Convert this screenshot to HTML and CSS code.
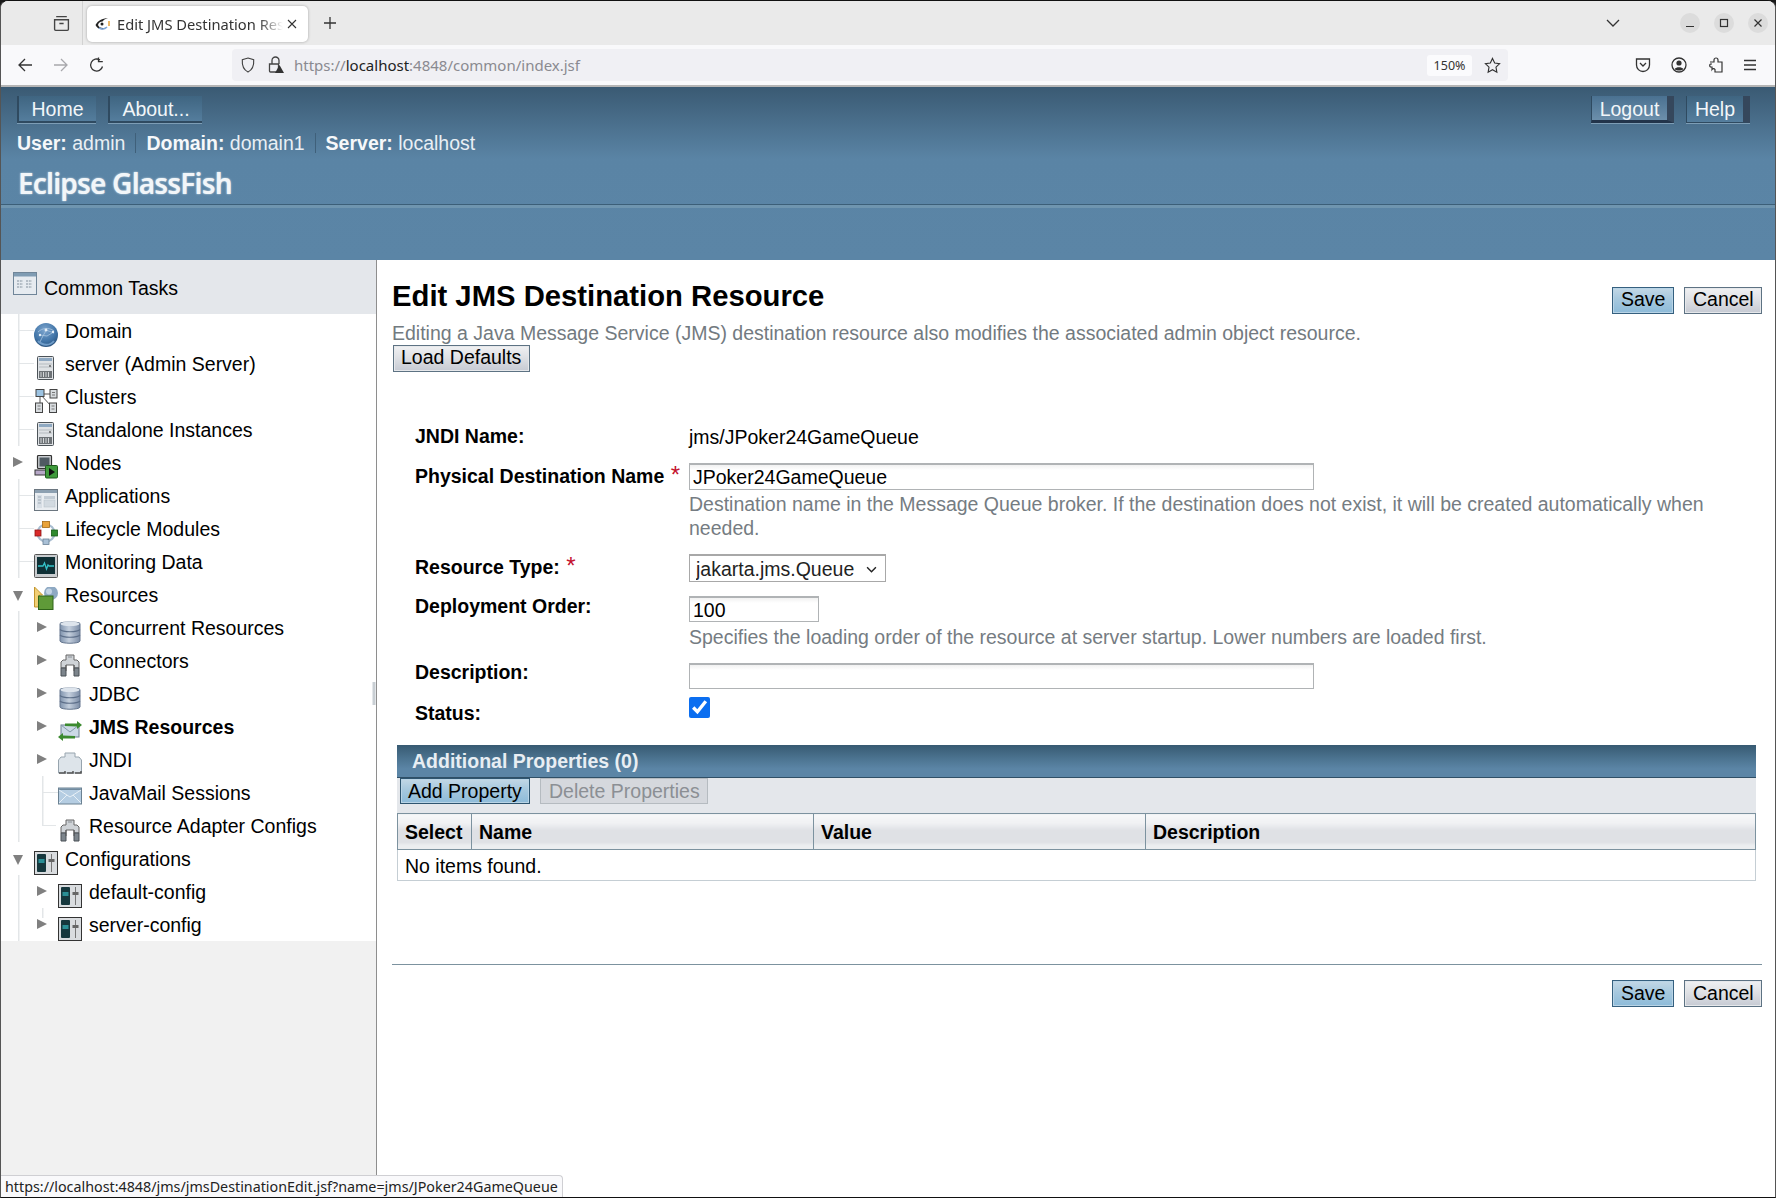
FILE: index.html
```html
<!DOCTYPE html>
<html lang="en">
<head>
<meta charset="utf-8">
<title>Edit JMS Destination Resource</title>
<link rel="stylesheet" href="styles.css">
</head>
<body>
<svg class="defs" width="0" height="0" aria-hidden="true">
  <defs>
    <linearGradient id="gDb" x1="0" x2="1" y1="0" y2="0"><stop offset="0" stop-color="#7f93ad"/><stop offset=".45" stop-color="#c4cfdd"/><stop offset="1" stop-color="#7b8ca6"/></linearGradient>
    <radialGradient id="gGlobe" cx=".45" cy=".3" r=".8"><stop offset="0" stop-color="#7ea6cf"/><stop offset=".6" stop-color="#3f73a6"/><stop offset="1" stop-color="#23466c"/></radialGradient>
    <symbol id="i-globe" viewBox="0 0 24 24"><circle cx="12" cy="12" r="12" fill="url(#gGlobe)"/><path d="M4 9c4-4 11-5 16-1M6 19c2-5 5-9 6-12M12 7l8 3M6 12l7 1 5-3" fill="none" stroke="#a9c5e0" stroke-width=".8"/><circle cx="12" cy="7" r="1.400" fill="#e6f0f8"/><circle cx="19" cy="9" r="1.200" fill="#e6f0f8"/><circle cx="6" cy="12" r="1.200" fill="#e6f0f8"/><path d="M4 18c5 5 12 5 16 0" fill="none" stroke="#6f9cc8" stroke-width="2"/></symbol>
    <symbol id="i-server" viewBox="0 0 24 24"><rect x="3.500" y=".5" width="16" height="23" rx="1" fill="#dfe2e5" stroke="#4c5358"/><rect x="5" y="2" width="13" height="3" fill="#8fa9c2"/><path d="M5 8h13M5 11h13" stroke="#b5bbc0"/><circle cx="16" cy="10" r=".9" fill="#555"/><rect x="5" y="15" width="13" height="7" fill="#6d7276"/><path d="M7 16v5M9.500 16v5M12 16v5M14.500 16v5" stroke="#d5d8da"/></symbol>
    <symbol id="i-cluster" viewBox="0 0 24 24"><path d="M6 5l11 0M6 5l12 13M6 5L6 18" stroke="#555" fill="none"/><rect x="2" y=".5" width="8" height="7" fill="#9cc3e2" stroke="#444"/><rect x="16" y=".5" width="7" height="8.500" fill="#d8dcdf" stroke="#444"/><rect x="1.500" y="14" width="7" height="9.500" fill="#d8dcdf" stroke="#444"/><rect x="15.500" y="14" width="7" height="9.500" fill="#d8dcdf" stroke="#444"/><path d="M18 3.500h3M18 6h3M3.500 17h3M3.500 20h3M17.500 17h3M17.500 20h3" stroke="#777"/></symbol>
    <symbol id="i-nodes" viewBox="0 0 24 24"><rect x="3.500" y=".5" width="14" height="13" rx="1" fill="#c9ccd0" stroke="#333" stroke-width="1.200"/><rect x="5.500" y="2.500" width="10" height="9" fill="#4f5a62"/><rect x="1" y="15" width="14" height="5" fill="#b7a8c8" stroke="#333"/><rect x="11.500" y="10.500" width="12" height="12.500" rx="1" fill="#3f9a3c" stroke="#1d5a1c"/><path d="M15 13v8l6-4z" fill="#111"/></symbol>
    <symbol id="i-apps" viewBox="0 0 24 24"><rect x=".5" y="1.500" width="23" height="21" fill="#e9edf1" stroke="#6b7680"/><rect x="1" y="2" width="22" height="3" fill="#8da0b1"/><rect x="3" y="7" width="5" height="13" fill="#d7dee5"/><rect x="10" y="8" width="11" height="3" fill="#c3ccd5"/><rect x="10" y="12" width="11" height="7" fill="#d2dae1" stroke="#b4bec7" stroke-width=".5"/><path d="M4 9h3M4 12h3M4 15h3" stroke="#9fabb6"/></symbol>
    <symbol id="i-life" viewBox="0 0 24 24"><circle cx="12" cy="12" r="8.500" fill="none" stroke="#a9bdd0" stroke-width="2.200"/><rect x="8.500" y=".5" width="7" height="6" fill="#e9a33a" stroke="#a66a14" stroke-width=".8"/><rect x="1" y="9" width="6" height="6" fill="#d92a2a" stroke="#8e1414" stroke-width=".8"/><rect x="17.500" y="9" width="6" height="6" fill="#2f8a2f" stroke="#175a17" stroke-width=".8"/><rect x="9" y="18" width="6" height="5.500" fill="#a9c0d6" stroke="#6a8297" stroke-width=".8"/></symbol>
    <symbol id="i-monitor" viewBox="0 0 24 24"><rect x=".5" y=".5" width="23" height="23" rx="1" fill="#c9cccf" stroke="#555"/><rect x="3" y="3" width="18" height="17" fill="#0f3036"/><path d="M4 12h5l1.500-3 2 6 1.500-4 1 1h5" fill="none" stroke="#35c2c9" stroke-width="1.300"/></symbol>
    <symbol id="i-res" viewBox="0 0 24 24"><path d="M.5 0v20h5V8h3z" fill="#f1cf75" stroke="#c3962f"/><circle cx="17" cy="6" r="7" fill="#8ea9c3"/><circle cx="15" cy="4.500" r="3" fill="#c3d4e4"/><rect x="4.500" y="9" width="14.500" height="13.500" fill="#5f9a38" stroke="#2f6419"/></symbol>
    <symbol id="i-db" viewBox="0 0 24 24"><path d="M2 3.500C2 1.500 22 1.500 22 3.500V21c0 3-20 3-20 0z" fill="url(#gDb)" stroke="#66778f"/><ellipse cx="12" cy="3.800" rx="9.500" ry="2.300" fill="#dde4ec"/><path d="M2 9.500c3 3 17 3 20 0M2 15c3 3 17 3 20 0" fill="none" stroke="#5d6f89" stroke-width="1.200"/></symbol>
    <symbol id="i-conn" viewBox="0 0 24 24"><path d="M8 2h8v5h3l2 2v6h-5v-3H8v3H3V9l2-2h3z" fill="#cfd3d7" stroke="#666"/><path d="M3 15h5v8H3zM16 15h5v8h-5z" fill="#7d858c" stroke="#4a5157"/><path d="M10 4h4" stroke="#8a9096"/><path d="M8 12v6M16 12v6" stroke="#555"/></symbol>
    <symbol id="i-jms" viewBox="0 0 24 24"><rect x="3" y="6" width="18" height="12" fill="#cbd9e6" stroke="#6c7f90"/><path d="M3 6l9 7 9-7" fill="none" stroke="#8499aa"/><path d="M7 7V4.500h12V2l5 4-5 4V7.500z" fill="#3b8a2f"/><path d="M17 17v2.500H5V22L0 18l5-4v2.500z" fill="#3b8a2f"/></symbol>
    <symbol id="i-jndi" viewBox="0 0 24 24"><path d="M7 1h10v4h4l2.500 3v13h-23V8L3 5h4z" fill="#dde4ea" stroke="#97a4ae"/><path d="M1 21h6v-2M9 21h6v-2M17 21h6v-2" fill="none" stroke="#555" stroke-width="1.500"/></symbol>
    <symbol id="i-mail" viewBox="0 0 24 24"><rect x=".5" y="3" width="23" height="16" fill="#b5cde2" stroke="#6b8192"/><rect x="1" y="3.500" width="22" height="1.500" fill="#718a9d"/><path d="M1 5l11 7 11-7M1 18l8-8M23 18l-8-8" fill="none" stroke="#e8f0f6"/></symbol>
    <symbol id="i-config" viewBox="0 0 24 24"><rect x=".5" y=".5" width="23" height="23" fill="#d9dcdf" stroke="#333"/><rect x="3" y="3" width="9" height="18" rx="1" fill="#16383e"/><rect x="4.500" y="8" width="6" height="4" fill="#2a8f96"/><path d="M17.500 3v18" stroke="#777"/><rect x="14.500" y="8" width="6" height="3" fill="#666"/></symbol>
    <symbol id="i-tasks" viewBox="0 0 24 24"><rect x=".5" y=".5" width="23" height="22" fill="#e6ebf0" stroke="#6f8598"/><rect x="1" y="1" width="22" height="3.500" fill="#7f9cb3"/><path d="M4 9h6M4 12h6M4 15h6M13 9h6M13 12h6M13 15h6" stroke="#a4afb8" stroke-width="1.500" stroke-dasharray="2 .8"/></symbol>
  </defs>
</svg>

<div class="window">
  <div class="tabbar">
    <svg class="tb-ic tb-archive" viewBox="0 0 16 16"><path d="M3 1.500h10M1.500 4.500h13v9a1 1 0 0 1-1 1h-11a1 1 0 0 1-1-1zM6 8h4" fill="none" stroke="#444" stroke-width="1.300"/></svg>
    <span class="tb-sep"></span>
    <div class="tab">
      <svg class="favicon" viewBox="0 0 16 14"><path d="M.5 8C3 3.500 7 1.500 13 1c-3 1-4.500 2-5.500 3.500C5 4.500 3.500 6 3 8c1 2.500 4 4 8 2.500C8 13.500 3 13 .5 8z" fill="#222"/><circle cx="7" cy="7" r="1.500" fill="#222"/><path d="M4 11c3 1.500 6 1 8-1" fill="none" stroke="#7ea6d8" stroke-width="1.500"/><path d="M14 4v5" stroke="#e9a33a" stroke-width="1.500"/></svg>
      <span class="tab-title">Edit JMS Destination Resource</span>
      <svg class="tab-x" viewBox="0 0 10 10"><path d="M1 1l8 8M9 1l-8 8" stroke="#333" stroke-width="1.100"/></svg>
    </div>
    <svg class="tb-plus" viewBox="0 0 14 14"><path d="M7 1v12M1 7h12" stroke="#333" stroke-width="1.300"/></svg>
    <span class="spacer"></span>
    <svg class="tb-chev" viewBox="0 0 14 8"><path d="M1 1l6 6 6-6" fill="none" stroke="#333" stroke-width="1.300"/></svg>
    <span class="winbtn"><svg viewBox="0 0 10 10"><path d="M1 8.500h8" stroke="#333" stroke-width="1.200"/></svg></span>
    <span class="winbtn"><svg viewBox="0 0 10 10"><rect x="1.500" y="1.500" width="7" height="7" fill="none" stroke="#333" stroke-width="1.200"/></svg></span>
    <span class="winbtn"><svg viewBox="0 0 10 10"><path d="M1.500 1.500l7 7M8.500 1.500l-7 7" stroke="#333" stroke-width="1.200"/></svg></span>
  </div>
  <div class="navbar">
    <svg class="nav-ic nav-back" viewBox="0 0 16 16"><path d="M15 8H2M8 2L2 8l6 6" fill="none" stroke="#333" stroke-width="1.300"/></svg>
    <svg class="nav-ic nav-fwd" viewBox="0 0 16 16"><path d="M1 8h13M8 2l6 6-6 6" fill="none" stroke="#a8a8ac" stroke-width="1.300"/></svg>
    <svg class="nav-ic nav-reload" viewBox="0 0 16 16"><path d="M13.500 9.500A6 6 0 1 1 11 3M9.500 .5v4.200h4.300" fill="none" stroke="#333" stroke-width="1.300"/></svg>
    <div class="urlbar">
      <svg class="url-shield" viewBox="0 0 16 18"><path d="M8 1l6.500 2c.5 7-1.500 11.500-6.500 14C3 14.500 1 10 1.500 3z" fill="none" stroke="#444" stroke-width="1.300"/></svg>
      <svg class="url-lock" viewBox="0 0 16 18"><path d="M4 8V4.500a3.500 3.500 0 0 1 7 0V8M1.500 8h9v8h-8a1 1 0 0 1-1-1z" fill="none" stroke="#444" stroke-width="1.300"/><path d="M11.500 9l4.500 8H7z" fill="#333"/></svg>
      <span class="url-text">https://<b>localhost</b>:4848/common/index.jsf</span>
      <span class="spacer"></span>
      <span class="zoom-pill">150%</span>
      <svg class="url-star" viewBox="0 0 18 18"><path d="M9 1.500l2.300 4.900 5.200.7-3.800 3.700.9 5.300L9 13.500l-4.600 2.600.9-5.300L1.500 7.100l5.200-.7z" fill="none" stroke="#333" stroke-width="1.200"/></svg>
    </div>
    <svg class="nav-tool tool-pocket" viewBox="0 0 16 16"><path d="M1.500 2h13v6a6.500 6.500 0 0 1-13 0zM5 6l3 3 3-3" fill="none" stroke="#333" stroke-width="1.300"/></svg>
    <svg class="nav-tool tool-acct" viewBox="0 0 16 16"><circle cx="8" cy="8" r="7" fill="none" stroke="#333" stroke-width="1.300"/><circle cx="8" cy="6" r="2.600" fill="#333"/><path d="M3.500 12c2-2.500 7-2.500 9 0-2 2-7 2-9 0z" fill="#333"/></svg>
    <svg class="nav-tool tool-ext" viewBox="0 0 16 16"><path d="M2 5h4V3a2 2 0 0 1 4 0v2h4v10H7v-2.500a1.800 1.800 0 0 0-3 0V10H2.500a1.800 1.800 0 0 1 0-3H4" fill="none" stroke="#333" stroke-width="1.200"/></svg>
    <svg class="nav-tool tool-menu" viewBox="0 0 16 16"><path d="M2 3.500h12M2 8h12M2 12.500h12" stroke="#333" stroke-width="1.300"/></svg>
  </div>

  <header class="masthead">
    <div class="mast-top">
      <div class="mast-group">
        <button class="mast-btn mast-left mast-home">Home</button>
        <button class="mast-btn mast-left mast-about">About...</button>
      </div>
      <div class="mast-group">
        <button class="mast-btn mast-right mast-logout">Logout</button>
        <button class="mast-btn mast-right mast-help">Help</button>
      </div>
    </div>
    <div class="mast-info">
      <span class="info-item"><b>User:</b> admin</span>
      <span class="info-item"><b>Domain:</b> domain1</span>
      <span class="info-item"><b>Server:</b> localhost</span>
    </div>
    <div class="brand">Eclipse GlassFish</div>
    <div class="mast-rule"></div>
  </header>

  <main class="body-row">
    <nav class="sidebar">
      <div class="tasks-head"><svg class="tasks-ic"><use href="#i-tasks"/></svg><span>Common Tasks</span></div>
      <div class="tree">
        <div class="row"><span class="slot elbow"></span><svg class="ic"><use href="#i-globe"/></svg><span class="lbl">Domain</span></div>
        <div class="row"><span class="slot elbow"></span><svg class="ic"><use href="#i-server"/></svg><span class="lbl">server (Admin Server)</span></div>
        <div class="row"><span class="slot elbow"></span><svg class="ic"><use href="#i-cluster"/></svg><span class="lbl">Clusters</span></div>
        <div class="row"><span class="slot elbow"></span><svg class="ic"><use href="#i-server"/></svg><span class="lbl">Standalone Instances</span></div>
        <div class="row"><span class="slot"><i class="tri"></i></span><svg class="ic"><use href="#i-nodes"/></svg><span class="lbl">Nodes</span></div>
        <div class="row"><span class="slot elbow"></span><svg class="ic"><use href="#i-apps"/></svg><span class="lbl">Applications</span></div>
        <div class="row"><span class="slot elbow"></span><svg class="ic"><use href="#i-life"/></svg><span class="lbl">Lifecycle Modules</span></div>
        <div class="row"><span class="slot elbow"></span><svg class="ic"><use href="#i-monitor"/></svg><span class="lbl">Monitoring Data</span></div>
        <div class="row"><span class="slot"><i class="tri tri-down"></i></span><svg class="ic"><use href="#i-res"/></svg><span class="lbl">Resources</span></div>
        <div class="sub">
          <div class="row l2"><span class="slot"><i class="tri"></i></span><svg class="ic"><use href="#i-db"/></svg><span class="lbl">Concurrent Resources</span></div>
          <div class="row l2"><span class="slot"><i class="tri"></i></span><svg class="ic"><use href="#i-conn"/></svg><span class="lbl">Connectors</span></div>
          <div class="row l2"><span class="slot"><i class="tri"></i></span><svg class="ic"><use href="#i-db"/></svg><span class="lbl">JDBC</span></div>
          <div class="row l2"><span class="slot"><i class="tri"></i></span><svg class="ic"><use href="#i-jms"/></svg><span class="lbl lbl-active">JMS Resources</span></div>
          <div class="row l2"><span class="slot"><i class="tri"></i></span><svg class="ic"><use href="#i-jndi"/></svg><span class="lbl">JNDI</span></div>
          <div class="row l2"><span class="slot elbow"></span><svg class="ic"><use href="#i-mail"/></svg><span class="lbl">JavaMail Sessions</span></div>
          <div class="row l2"><span class="slot elbow elbow-end"></span><svg class="ic"><use href="#i-conn"/></svg><span class="lbl">Resource Adapter Configs</span></div>
        </div>
        <div class="row"><span class="slot"><i class="tri tri-down"></i></span><svg class="ic"><use href="#i-config"/></svg><span class="lbl">Configurations</span></div>
        <div class="sub">
          <div class="row l2"><span class="slot"><i class="tri"></i></span><svg class="ic"><use href="#i-config"/></svg><span class="lbl">default-config</span></div>
          <div class="row l2"><span class="slot stub"><i class="tri"></i></span><svg class="ic"><use href="#i-config"/></svg><span class="lbl">server-config</span></div>
        </div>
      </div>
      <div class="side-rest"></div>
      <div class="grip"></div>
    </nav>

    <section class="content">
      <div class="page-head">
        <h1 class="page-title">Edit JMS Destination Resource</h1>
        <div class="actions">
          <button class="btn btn-primary">Save</button>
          <button class="btn">Cancel</button>
        </div>
      </div>
      <p class="page-help">Editing a Java Message Service (JMS) destination resource also modifies the associated admin object resource.</p>
      <button class="btn btn-load">Load Defaults</button>

      <div class="prop prop-jndi">
        <div class="prop-label">JNDI Name:</div>
        <div class="prop-value">jms/JPoker24GameQueue</div>
      </div>
      <div class="prop prop-phys">
        <div class="prop-label">Physical Destination Name <span class="req">*</span></div>
        <div>
          <input class="field field-wide" type="text" value="JPoker24GameQueue">
          <div class="field-help help-phys">Destination name in the Message Queue broker. If the destination does not exist, it will be created automatically when needed.</div>
        </div>
      </div>
      <div class="prop prop-type">
        <div class="prop-label">Resource Type: <span class="req">*</span></div>
        <div class="select-wrap">
          <select class="select"><option>jakarta.jms.Queue</option></select>
          <svg class="select-chev" viewBox="0 0 10 6"><path d="M1 1l4 4 4-4" fill="none" stroke="#222" stroke-width="1.300"/></svg>
        </div>
      </div>
      <div class="prop prop-order">
        <div class="prop-label">Deployment Order:</div>
        <div>
          <input class="field field-short" type="text" value="100">
          <div class="field-help help-order">Specifies the loading order of the resource at server startup. Lower numbers are loaded first.</div>
        </div>
      </div>
      <div class="prop prop-desc">
        <div class="prop-label">Description:</div>
        <div><input class="field field-wide field-desc" type="text"></div>
      </div>
      <div class="prop prop-status">
        <div class="prop-label label-status">Status:</div>
        <div><input class="check" type="checkbox" checked></div>
      </div>

      <div class="panel">
        <div class="panel-title">Additional Properties (0)</div>
        <div class="panel-tools">
          <button class="btn btn-primary btn-tool">Add Property</button>
          <button class="btn btn-disabled btn-tool btn-tool-del">Delete Properties</button>
        </div>
        <table class="grid-table">
          <colgroup><col class="col-sel"><col class="col-name"><col class="col-val"><col></colgroup>
          <thead><tr><th>Select</th><th>Name</th><th>Value</th><th>Description</th></tr></thead>
          <tbody><tr><td colspan="4">No items found.</td></tr></tbody>
        </table>
      </div>

      <div class="foot-actions">
        <button class="btn btn-primary">Save</button>
        <button class="btn">Cancel</button>
      </div>
    </section>
  </main>
  <div class="statusbar">https://localhost:4848/jms/jmsDestinationEdit.jsf?name=jms/JPoker24GameQueue</div>
</div>
</body>
</html>
```
FILE: styles.css
```css
* { box-sizing: border-box; }
html, body { margin: 0; height: 100%; background: #1a1a1a; overflow: hidden; }
body { font-family: "Liberation Sans", Arial, sans-serif; font-size: 19.5px; color: #000; }
.defs { position: absolute; }
.window { position: relative; width: 1776px; height: 1198px; display: flex; flex-direction: column; overflow: hidden; background: #fff; border: 1px solid #555; border-top-color: #111; border-bottom-color: #111; border-top-left-radius: 8px; border-top-right-radius: 8px; }
.spacer { flex: 1; }
svg { display: block; flex: none; }

/* browser chrome */
.tabbar { height: 44px; background: #eaeaea; display: flex; align-items: center; font-family: "Noto Sans", sans-serif; }
.tb-archive { width: 17px; height: 17px; margin-left: 52px; }
.tb-sep { width: 1px; height: 44px; background: #d2d2d2; margin-left: 12px; }
.tab { width: 221px; height: 36px; margin: 1px 0 0 4px; background: #fff; border-radius: 5px; box-shadow: 0 0 3px rgba(0,0,0,.3); display: flex; align-items: center; padding-left: 8px; }
.favicon { width: 16px; height: 14px; }
.tab-title { font-size: 14.700px; color: #333; margin-left: 6px; width: 166px; white-space: nowrap; overflow: hidden; -webkit-mask-image: linear-gradient(90deg, #000 85%, transparent); mask-image: linear-gradient(90deg, #000 85%, transparent); }
.tab-x { width: 10px; height: 10px; margin-left: 4px; }
.tb-plus { width: 14px; height: 14px; margin-left: 15px; }
.tb-chev { width: 14px; height: 8px; margin-right: 60px; }
.winbtn { width: 20px; height: 20px; border-radius: 50%; background: #dcdcdc; display: flex; align-items: center; justify-content: center; margin-right: 14px; }
.winbtn:last-child { margin-right: 7px; }
.winbtn svg { width: 10px; height: 10px; }
.navbar { height: 42px; background: #f9f9fb; border-bottom: 2px solid #b5b5b5; display: flex; align-items: center; font-family: "Noto Sans", sans-serif; }
.nav-ic { width: 16px; height: 16px; }
.nav-back { margin-left: 16px; }
.nav-fwd { margin-left: 20px; }
.nav-reload { margin-left: 20px; }
.urlbar { width: 1276px; height: 32px; margin-left: 127px; background: #f0f0f4; border-radius: 4px; display: flex; align-items: center; padding-left: 9px; }
.url-shield { width: 14px; height: 16px; }
.url-lock { width: 16px; height: 18px; margin-left: 13px; }
.url-text { font-size: 15px; color: #8a8a90; margin-left: 10px; }
.url-text b { font-weight: 400; color: #222; }
.zoom-pill { width: 45px; height: 21px; background: #fbfbfd; border-radius: 3px; font-size: 12.500px; color: #333; text-align: center; line-height: 21px; }
.url-star { width: 17px; height: 17px; margin: 0 7px 0 12px; }
.nav-tool { width: 16px; height: 16px; }
.tool-pocket { margin-left: 127px; }
.tool-acct { margin-left: 20px; }
.tool-ext { margin-left: 21px; }
.tool-menu { margin-left: 18px; }

/* masthead */
.masthead { height: 173px; flex: none; background: linear-gradient(#3a5a73 0, #5a84a5 72px, #5b85a6 100%); padding-top: 9px; color: #fff; }
.mast-top { display: flex; justify-content: space-between; padding: 0 25px 0 16px; }
.mast-group { display: flex; gap: 12px; }
.mast-btn { height: 27px; padding: 0; font: inherit; color: #f2f6f9; background: linear-gradient(#3f6581, #557e9e); border: 0; text-align: center; }
.mast-left { border-left: 2px solid #2f4a60; border-bottom: 1px solid #2f4a60; box-shadow: inset 0 -1px 0 #2f4a60, 0 1px 0 #7d9db5; }
.mast-right { border-right: 7px solid #35475c; border-left: 1px solid #2f4a60; box-shadow: 0 1px 0 #7d9db5; }
.mast-home { width: 79px; }
.mast-about { width: 94px; }
.mast-logout { width: 83px; border-bottom: 3px solid #22344a; padding-top: 2px; background: linear-gradient(#4a7191, #6c8fab); }
.mast-help { width: 64px; border-bottom: 1px solid #2f4a60; }
.mast-info { display: flex; margin: 8px 0 0 16px; line-height: 24px; color: #e9eff4; }
.info-item { padding-right: 10px; margin-right: 10px; border-right: 1px solid #3f607a; height: 20px; line-height: 20px; margin-top: 2px; }
.info-item:last-child { border-right: 0; }
.info-item b { color: #f6f8fa; }
.brand { margin: 13px 0 0 17px; font-family: "Noto Sans", sans-serif; font-weight: 600; font-size: 28px; line-height: 34px; letter-spacing: -.8px; color: #f2f6f9; text-shadow: 0 0 2px #d4e0e8; height: 34px; }
.mast-rule { margin-top: 4px; height: 4px; border-top: 1px solid #3c5f78; background: #6f95af; }

/* sidebar */
.body-row { flex: 1; display: flex; min-height: 0; }
.sidebar { position: relative; width: 376px; flex: none; border-right: 1px solid #8e8e8e; display: flex; flex-direction: column; background: #fff; }
.tasks-head { height: 54px; background: #e4e7eb; display: flex; align-items: center; padding: 0 0 0 12px; }
.tasks-ic { width: 24px; height: 24px; margin-top: -6px; }
.tasks-head span { margin-left: 7px; padding-top: 2px; }
.tree { flex: none; }
.row { height: 33px; display: flex; padding-left: 9px; line-height: 33px; }
.row.l2 { padding-left: 33px; }
.slot { width: 24px; flex: none; height: 33px; }
.elbow { background: linear-gradient(#e3e6e8, #e3e6e8) 8px 0 / 1.500px 100% no-repeat, linear-gradient(#e3e6e8, #e3e6e8) 8px 16px / 16px 1px no-repeat; }
.elbow-end { background: linear-gradient(#e3e6e8, #e3e6e8) 8px 0 / 1.500px 17px no-repeat, linear-gradient(#e3e6e8, #e3e6e8) 8px 16px / 14px 1px no-repeat; }
.stub { background: linear-gradient(#e3e6e8, #e3e6e8) 8px 0 / 1.500px 10px no-repeat; }
.sub { background: linear-gradient(#e3e6e8, #e3e6e8) 17px 0 / 1.500px 100% no-repeat; }
.tri { display: block; width: 0; height: 0; margin: 11px 0 0 3px; border-left: 10px solid #808080; border-top: 5.500px solid transparent; border-bottom: 5.500px solid transparent; }
.tri-down { margin: 13px 0 0 3px; border-left: 5.500px solid transparent; border-right: 5.500px solid transparent; border-top: 10px solid #808080; border-bottom: 0; }
.ic { width: 24px; height: 24px; margin-top: 9px; }
.lbl { margin-left: 7px; line-height: 33px; height: 33px; padding-top: 1px; color: #000; white-space: nowrap; }
.lbl-active { font-weight: 700; }
.side-rest { flex: 1; background: #f1f1f1; }
.grip { position: absolute; right: 0; top: 422px; width: 4px; height: 23px; background: #c9cfd4; border-left: 1px solid #e4e7ea; border-right: 1px solid #e4e7ea; }

/* content */
.content { flex: 1; min-width: 0; padding: 18px 13px 0 15px; }
.page-head { display: flex; justify-content: space-between; align-items: flex-end; height: 36px; }
.page-title { margin: 0; font-size: 29.250px; line-height: 36px; font-weight: 700; color: #000; }
.actions { display: flex; gap: 10px; }
.btn { height: 27px; padding: 0 8px; font: inherit; line-height: 23px; color: #000; border: 1px solid #5d7283; border-radius: 0; background: linear-gradient(#f0f1f3 0, #dfe1e5 45%, #c6cad3 100%); box-shadow: inset 0 0 0 1px #e6e8eb; white-space: nowrap; }
.btn-primary { border-color: #35607f; background: linear-gradient(#c3d8e6 0, #a6c8de 45%, #8dbbd9 100%); box-shadow: inset 0 0 0 1px #b9d4e6; }
.actions .btn-primary, .foot-actions .btn-primary { width: 62px; }
.actions .btn:last-child, .foot-actions .btn:last-child { width: 78px; }
.actions .btn { padding-bottom: 2px; }
.page-help { margin: 7px 0 0; line-height: 24px; color: #727a80; }
.btn-load { display: block; width: 137px; margin-left: 1px; padding: 0 9px 2px 7px; }
.prop { display: grid; grid-template-columns: 274px 1fr; padding-left: 23px; }
.prop-label { font-weight: 700; line-height: 24px; color: #000; }
.prop-value { line-height: 26px; }
.req { color: #c4122f; font-weight: 400; font-size: 24px; line-height: 14px; vertical-align: -1px; position: relative; top: -1px; margin-left: 1px; }
.prop-jndi { margin-top: 52px; height: 24px; }
.prop-phys { margin-top: 15px; }
.prop-phys .prop-label, .prop-type .prop-label { padding-top: 1px; }
.prop-type { margin-top: 14px; }
.prop-order { margin-top: 12px; }
.prop-order .field { margin-top: 2px; }
.prop-desc { margin-top: 11px; }
.prop-desc .field { margin-top: 3px; }
.prop-status { margin-top: 8px; }
.label-status { padding-top: 4px; }
.field { display: block; height: 27px; font: inherit; color: #000; border: 1px solid #b0b3b5; border-top: 2px solid #b0b3b5; padding: 1px 3px 0; background: linear-gradient(#f1f1f1 0, #fff 5px); outline: 0; }
.field-wide { width: 625px; }
.field-short { width: 130px; height: 26px; }
.field-desc { height: 26px; }
.field-help { line-height: 24px; color: #757c82; }
.help-phys { margin-top: 2px; }
.help-order { margin-top: 3px; }
.select-wrap { position: relative; width: 197px; height: 28px; }
.select { appearance: none; -webkit-appearance: none; display: block; width: 197px; height: 28px; font: inherit; color: #222; background: #fff; border: 1px solid #a8a8a8; border-top-width: 2px; border-radius: 0; padding: 0 0 0 6px; outline: 0; }
.select-chev { position: absolute; right: 9px; top: 12px; width: 11px; height: 7px; pointer-events: none; }
.check { display: block; margin: 0; width: 21px; height: 21px; accent-color: #0b6ef0; }

.panel { margin: 20px 6px 0 5px; }
.panel-title { height: 33px; border-bottom: 1px solid #2f4f66; background: linear-gradient(#375a72 0, #4d7592 45%, #5b85a6 75%); padding-left: 15px; font-weight: 700; line-height: 32px; color: #e8eef3; }
.panel-tools { height: 35px; background: #e4e7eb; display: flex; align-items: flex-start; padding-left: 3px; gap: 10px; }
.btn-tool { height: 26px; line-height: 22px; padding-bottom: 1px; }
.btn-tool.btn-primary { width: 130px; border-color: #2e5570; padding: 0 9px 1px 7px; }
.btn-tool-del { width: 168px; }
.btn-disabled { color: #8b8f94; border-color: #b5bbc0; background: #d5d8dd; box-shadow: none; }
.grid-table { width: 100%; table-layout: fixed; border-collapse: collapse; }
.col-sel { width: 74px; }
.col-name { width: 342px; }
.col-val { width: 332px; }
.grid-table th { height: 36px; padding: 2px 0 0 7px; text-align: left; font-weight: 700; border: 1px solid #7c929f; background: linear-gradient(#f7f8f9 0, #f0f1f3 25%, #dfe1e5 45%, #dfe1e5 80%, #eceef0 88%); }
.grid-table td { height: 31px; padding: 3px 0 0 7px; border: 1px solid #c5ced4; border-top: 0; }
.foot-actions { display: flex; justify-content: flex-end; gap: 10px; margin-top: 83px; border-top: 1px solid #7c929f; padding-top: 15px; }

.statusbar { position: absolute; left: 0; bottom: 0; height: 22px; padding: 0 4px; background: #f9f9fb; border: 1px solid #cfcfd3; border-left: 0; border-bottom: 0; border-top-right-radius: 4px; font-family: "Noto Sans", sans-serif; font-size: 14.300px; line-height: 22px; color: #222; white-space: nowrap; }
```
